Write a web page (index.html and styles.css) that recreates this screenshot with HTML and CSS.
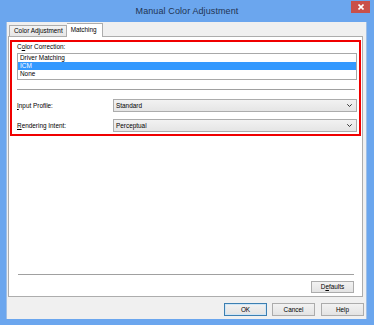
FILE: index.html
```
<!DOCTYPE html>
<html>
<head>
<title>Manual Color Adjustment</title>
<link rel="stylesheet" href="styles.css">
</head>
<body>

<div class="window">

	<div class="titlebar">
		<div></div>
		<div class="title">Manual Color Adjustment</div>
		<div class="close">
			<svg width="6" height="6" viewBox="0 0 6 6"><path d="M0.5 0.5 L5.5 5.5 M5.5 0.5 L0.5 5.5" stroke="#fff" stroke-width="1.6"/></svg>
		</div>
	</div>

	<div class="client">

		<div class="tabs">
			<div class="tab">Color Adjustment</div>
			<div class="tab active">Matching</div>
		</div>

		<div class="panel">
			<div class="highlight">
				<div class="label">C<u>o</u>lor Correction:</div>
				<div class="listbox">
					<div class="item">Driver Matching</div>
					<div class="item sel">ICM</div>
					<div class="item">None</div>
				</div>
				<div class="sep"></div>
				<div class="row">
					<div class="row-label"><u>I</u>nput Profile:</div>
					<div class="select">
						<span>Standard</span>
						<svg width="5" height="3" viewBox="0 0 5 3"><path d="M0.3 0.3 L2.5 2.5 L4.7 0.3" fill="none" stroke="#333" stroke-width="1"/></svg>
					</div>
				</div>
				<div class="row">
					<div class="row-label"><u>R</u>endering Intent:</div>
					<div class="select">
						<span>Perceptual</span>
						<svg width="5" height="3" viewBox="0 0 5 3"><path d="M0.3 0.3 L2.5 2.5 L4.7 0.3" fill="none" stroke="#333" stroke-width="1"/></svg>
					</div>
				</div>
			</div>

			<div class="spacer"></div>
			<div class="sep bottom-sep"></div>
			<div class="defaults-row">
				<div class="btn defaults">D<u>e</u>faults</div>
			</div>
		</div>

		<div class="buttons">
			<div class="btn default">OK</div>
			<div class="btn">Cancel</div>
			<div class="btn">Help</div>
		</div>

	</div>
</div>

</body>
</html>
```

FILE: styles.css
```
html, body {
	margin: 0;
	padding: 0;
}
body {
	width: 374px;
	height: 325px;
	background: #6ba6ee;
	font-family: "Liberation Sans", Arial, sans-serif;
	font-size: 6.4px;
	color: #000;
	overflow: hidden;
}
u { text-decoration-thickness: 1px; }

.window {
	display: flex;
	flex-direction: column;
	height: 325px;
}

/* title bar */
.titlebar {
	height: 22px;
	display: grid;
	grid-template-columns: 1fr auto 1fr;
	align-items: start;
}
.title {
	font-size: 9px;
	line-height: 22px;
	color: #1f3454;
	letter-spacing: 0.1px;
}
.close {
	justify-self: end;
	width: 19px;
	height: 12px;
	margin: 1px 4px 0 0;
	background: #c9504a;
	display: flex;
	align-items: center;
	justify-content: center;
}

/* client area */
.client {
	height: 297px;
	margin: 0 7px 0 6px;
	background: #f0f0f0;
	display: flex;
	flex-direction: column;
	padding: 1px 4px 0 2px;
	box-sizing: border-box;
	box-shadow: inset 1px 0 0 #9fbfe6, inset -1px 0 0 #9fbfe6;
}

.tabs {
	height: 13px;
	display: flex;
	align-items: flex-end;
	padding-left: 1px;
}
.tab {
	height: 11px;
	box-sizing: border-box;
	padding: 0 3px 0 4px;
	line-height: 10px;
	border: 1px solid #adadad;
	border-bottom: none;
	background: linear-gradient(#f3f3f3, #e6e6e6);
}
.tab.active {
	height: 14px;
	margin-bottom: -1px;
	padding: 0 5px 0 4px;
	line-height: 11px;
	border-left: none;
	background: #fff;
	position: relative;
	z-index: 1;
}

.panel {
	height: 261px;
	box-sizing: border-box;
	background: #fff;
	border: 1px solid #adadad;
	padding: 3px 1px 3px 1px;
	display: flex;
	flex-direction: column;
}

/* red frame */
.highlight {
	border: 2px solid #f00000;
	padding: 1px 2px 2px 5px;
	display: flex;
	flex-direction: column;
}
.label {
	height: 8px;
	line-height: 8px;
}
.listbox {
	margin-top: 2px;
	border: 1px solid #a8a8a8;
	padding-bottom: 1px;
}
.item {
	height: 8px;
	line-height: 8px;
	padding-left: 2px;
}
.item.sel {
	background: #3399ff;
	color: #fff;
}
.sep {
	height: 1px;
	background: #a0a0a0;
	margin: 9px 2px 9px 0;
}
.row {
	display: flex;
	align-items: center;
	margin-bottom: 7px;
}
.row:last-child { margin-bottom: 0; }
.row-label {
	width: 96px;
}
.select {
	flex: 1;
	height: 13px;
	box-sizing: border-box;
	border: 1px solid #acacac;
	background: linear-gradient(#f2f2f2, #e5e5e5);
	display: flex;
	align-items: center;
	justify-content: space-between;
	padding: 0 4px 0 2px;
}

.spacer { flex: 1; }
.bottom-sep {
	margin: 0 7px 0 8px;
}
.defaults-row {
	display: flex;
	justify-content: flex-end;
	margin: 6px 7px 0 0;
}

.btn {
	width: 43px;
	height: 13px;
	box-sizing: border-box;
	border: 1px solid #acacac;
	background: linear-gradient(#f2f2f2, #e3e3e3);
	text-align: center;
	line-height: 11px;
}
.btn.defaults { height: 12px; line-height: 10px; }
.btn.default {
	border-color: #3c7fb1;
	box-shadow: inset 0 0 0 1px #cfe6f7;
}

.buttons {
	display: flex;
	justify-content: flex-end;
	gap: 6px;
	margin: 6px -1px 0 0;
}
.buttons .btn:first-child { margin-right: -1px; }
```
